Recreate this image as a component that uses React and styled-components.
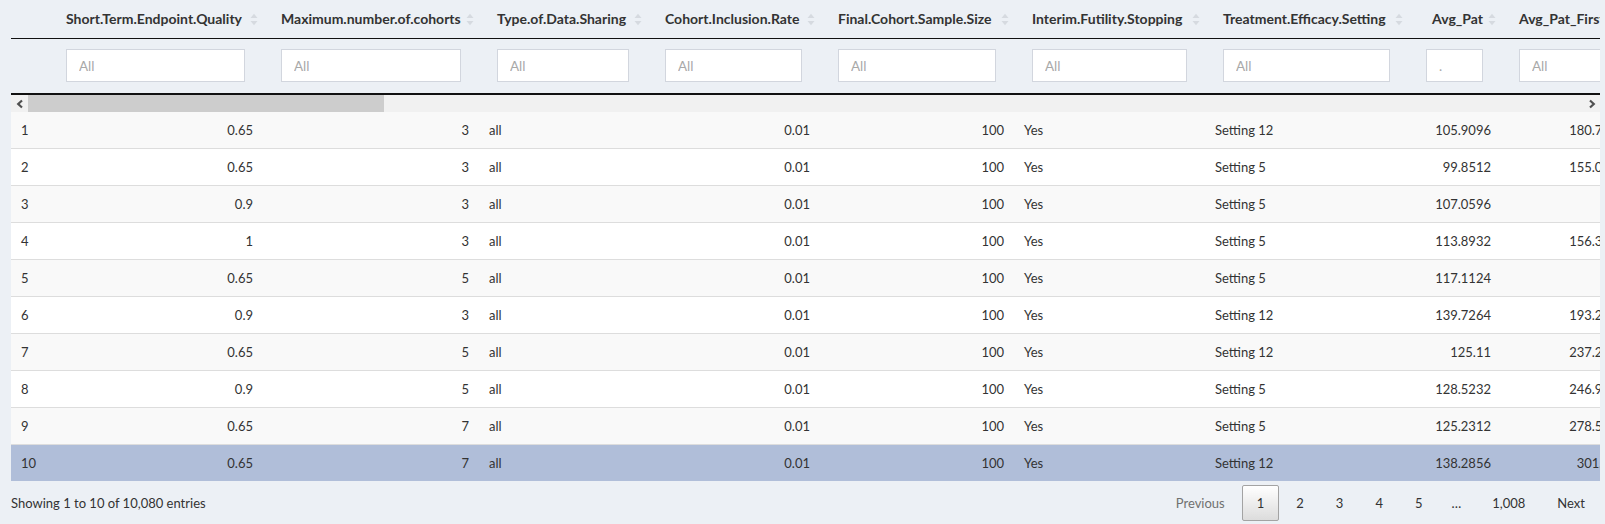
import React from "react";
import styled, { createGlobalStyle } from "styled-components";

const GlobalStyle = createGlobalStyle`
  html, body {
    margin: 0;
    padding: 0;
    background: #ecf0f5;
  }
  body {
    font-family: "Lato", "Liberation Sans", sans-serif;
    font-size: 13px;
    line-height: 20px;
    color: #333;
  }
`;

const Page = styled.div`
  width: 1605px;
  height: 524px;
  box-sizing: border-box;
  padding: 0 5px 0 11px;
  overflow: hidden;
`;

const Viewport = styled.div`
  width: 100%;
  overflow: hidden;
`;

const Table = styled.table`
  table-layout: fixed;
  border-collapse: separate;
  border-spacing: 0;
  width: ${(p) => p.$width}px;
`;

const HeadCell = styled.th`
  padding: 9px 5px 9px 18px;
  border-bottom: 1px solid #111;
  font-size: 14px;
  font-weight: bold;
  color: #333;
  white-space: nowrap;
  vertical-align: middle;
`;

const HeadInner = styled.div`
  display: flex;
  align-items: center;
  gap: 5px;
`;

const HeadLabel = styled.span`
  flex: 1;
  min-width: 0;
  text-align: ${(p) => p.$align};
`;

const FilterCell = styled.td`
  padding: 10px 18px 11px;
  height: 33px;
  border-bottom: 2px solid #111;
`;

const FilterInput = styled.input`
  display: block;
  box-sizing: border-box;
  width: 100%;
  height: 33px;
  margin: 0;
  padding: 6px 12px;
  border: 1px solid #d2d6de;
  border-radius: 0;
  background: #fff;
  font: inherit;
  font-size: 13.5px;
  color: #555;
  outline: none;
  &::placeholder {
    color: #a8a8a8;
  }
`;

const ScrollBar = styled.div`
  display: flex;
  height: 17px;
  background: #f1f1f1;
`;

const ScrollButton = styled.div`
  flex: 0 0 17px;
  display: flex;
  align-items: center;
  justify-content: center;
`;

const ScrollTrack = styled.div`
  flex: 1;
  display: flex;
`;

const ScrollThumb = styled.div`
  width: ${(p) => p.$size}px;
  background: #cdcdcd;
`;

const Row = styled.tr`
  background: ${(p) => (p.$selected ? "#b0bed9" : p.$odd ? "#f9f9f9" : "#fff")};
`;

const Cell = styled.td`
  padding: 8px 10px;
  border-top: ${(p) => (p.$first ? "none" : "1px solid #ddd")};
  text-align: ${(p) => p.$align};
  white-space: nowrap;
  overflow: hidden;
`;

const Footer = styled.div`
  display: flex;
  justify-content: space-between;
  align-items: center;
  padding-top: 4px;
`;

const Info = styled.div`
  color: #333;
`;

const Pager = styled.div`
  display: flex;
  align-items: center;
`;

const PageButton = styled.span`
  box-sizing: border-box;
  min-width: 21px;
  margin-left: 2px;
  padding: 7px 14px;
  border: 1px solid ${(p) => (p.$current ? "#a3a3a3" : "transparent")};
  border-radius: 2px;
  color: ${(p) => (p.$disabled ? "#707070" : "#333")};
  background: ${(p) =>
    p.$current ? "linear-gradient(to bottom, #fff 0%, #dcdcdc 100%)" : "transparent"};
  text-align: center;
`;

const Ellipsis = styled.span`
  padding: 0 14px;
  color: #333;
`;

const columns = [
  { key: "idx", label: "", width: 37, align: "left", filter: false },
  { key: "quality", label: "Short.Term.Endpoint.Quality", width: 215, align: "right" },
  { key: "cohorts", label: "Maximum.number.of.cohorts", width: 216, align: "right" },
  { key: "sharing", label: "Type.of.Data.Sharing", width: 168, align: "left" },
  { key: "rate", label: "Cohort.Inclusion.Rate", width: 173, align: "right" },
  { key: "size", label: "Final.Cohort.Sample.Size", width: 194, align: "right" },
  { key: "futility", label: "Interim.Futility.Stopping", width: 191, align: "left" },
  { key: "setting", label: "Treatment.Efficacy.Setting", width: 203, align: "left" },
  { key: "avg", label: "Avg_Pat", width: 93, align: "right", headAlign: "right", placeholder: "." },
  { key: "first", label: "Avg_Pat_First", width: 134, align: "right" },
];

const rows = [
  ["1", "0.65", "3", "all", "0.01", "100", "Yes", "Setting 12", "105.9096", "180.7184"],
  ["2", "0.65", "3", "all", "0.01", "100", "Yes", "Setting 5", "99.8512", "155.0432"],
  ["3", "0.9", "3", "all", "0.01", "100", "Yes", "Setting 5", "107.0596", ""],
  ["4", "1", "3", "all", "0.01", "100", "Yes", "Setting 5", "113.8932", "156.3568"],
  ["5", "0.65", "5", "all", "0.01", "100", "Yes", "Setting 5", "117.1124", ""],
  ["6", "0.9", "3", "all", "0.01", "100", "Yes", "Setting 12", "139.7264", "193.2176"],
  ["7", "0.65", "5", "all", "0.01", "100", "Yes", "Setting 12", "125.11", "237.2448"],
  ["8", "0.9", "5", "all", "0.01", "100", "Yes", "Setting 5", "128.5232", "246.9904"],
  ["9", "0.65", "7", "all", "0.01", "100", "Yes", "Setting 5", "125.2312", "278.5216"],
  ["10", "0.65", "7", "all", "0.01", "100", "Yes", "Setting 12", "138.2856", "301.136"],
];

const tableWidth = columns.reduce((sum, c) => sum + c.width, 0);

const SortIcon = () => (
  <svg width="8" height="13" viewBox="0 0 8 13">
    <polygon points="0.5,5 4,0.8 7.5,5" fill="#d6dae0" />
    <polygon points="0.5,8 4,12.2 7.5,8" fill="#d6dae0" />
  </svg>
);

const Chevron = ({ dir }) => (
  <svg width="8" height="10" viewBox="0 0 8 10">
    <polyline
      points={dir === "left" ? "6,1.5 2.2,5 6,8.5" : "2,1.5 5.8,5 2,8.5"}
      fill="none"
      stroke="#505050"
      strokeWidth="2.2"
    />
  </svg>
);

const ColGroup = () => (
  <colgroup>
    {columns.map((c) => (
      <col key={c.key} style={{ width: c.width }} />
    ))}
  </colgroup>
);

const App = () => {
  return (
    <Page>
      <GlobalStyle />
      <Viewport>
        <Table $width={tableWidth}>
          <ColGroup />
          <thead>
            <tr>
              {columns.map((c) => (
                <HeadCell key={c.key}>
                  {c.label && (
                    <HeadInner>
                      <HeadLabel $align={c.headAlign || "left"}>{c.label}</HeadLabel>
                      <SortIcon />
                    </HeadInner>
                  )}
                </HeadCell>
              ))}
            </tr>
            <tr>
              {columns.map((c) => (
                <FilterCell key={c.key}>
                  {c.filter !== false && (
                    <FilterInput type="search" placeholder={c.placeholder || "All"} readOnly />
                  )}
                </FilterCell>
              ))}
            </tr>
          </thead>
        </Table>
      </Viewport>

      <ScrollBar>
        <ScrollButton>
          <Chevron dir="left" />
        </ScrollButton>
        <ScrollTrack>
          <ScrollThumb $size={356} />
        </ScrollTrack>
        <ScrollButton>
          <Chevron dir="right" />
        </ScrollButton>
      </ScrollBar>

      <Viewport>
        <Table $width={tableWidth}>
          <ColGroup />
          <tbody>
            {rows.map((r, i) => (
              <Row key={r[0]} $odd={i % 2 === 0} $selected={i === 9}>
                {r.map((v, j) => (
                  <Cell key={columns[j].key} $align={columns[j].align} $first={i === 0}>
                    {v}
                  </Cell>
                ))}
              </Row>
            ))}
          </tbody>
        </Table>
      </Viewport>

      <Footer>
        <Info>Showing 1 to 10 of 10,080 entries</Info>
        <Pager>
          <PageButton $disabled>Previous</PageButton>
          <PageButton $current>1</PageButton>
          <PageButton>2</PageButton>
          <PageButton>3</PageButton>
          <PageButton>4</PageButton>
          <PageButton>5</PageButton>
          <Ellipsis>…</Ellipsis>
          <PageButton>1,008</PageButton>
          <PageButton>Next</PageButton>
        </Pager>
      </Footer>
    </Page>
  );
};

export default App;
